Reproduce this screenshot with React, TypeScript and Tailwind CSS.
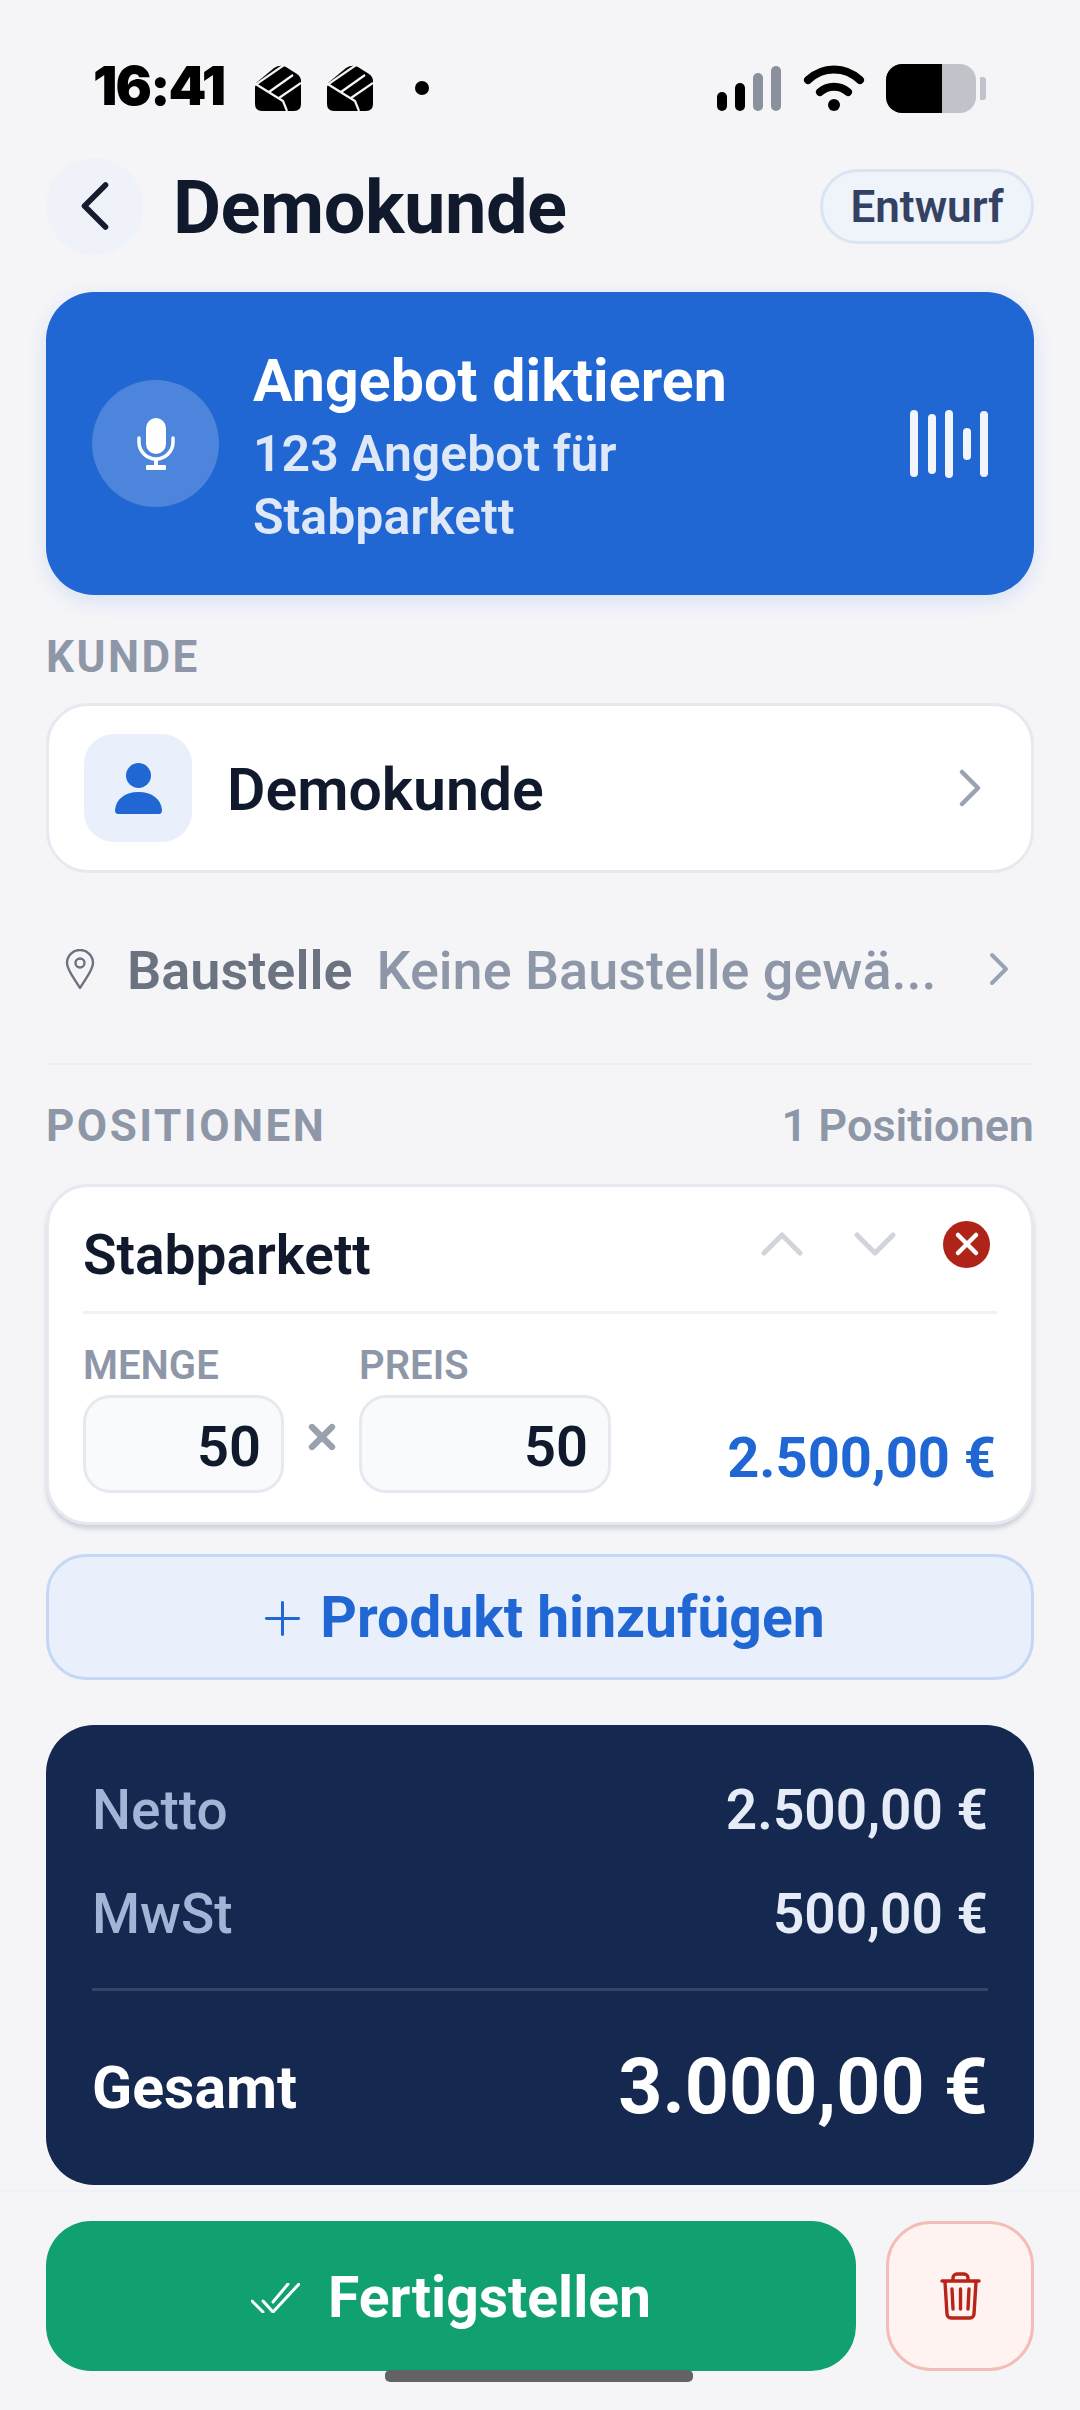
import { ChevronLeft, ChevronRight, ChevronUp, ChevronDown, Plus, X } from "lucide-react";

function Fist({ className }: { className?: string }) {
  return (
    <svg viewBox="0 0 46 46" className={className}>
      <path d="M1 18 L19 3 Q25 -1 31 2 L42 9 Q46 12 46 16 V39 Q46 46 39 46 H7 Q0 46 0 39 V22 Z" fill="#000" />
      <path d="M0 20 L29 0 M14 27 L38 10 M24 33 L46 18 M-1 18 L28 36 L32 46" fill="none" stroke="#f5f5f8" strokeWidth="2.2" />
    </svg>
  );
}

function StatusBar() {
  return (
    <div className="h-[50px] mt-[63px] pl-[93px] pr-[94px] flex items-center">
      <span className="[font-family:Inter,sans-serif] font-black text-[54px] leading-none tracking-[-1.8px] text-black w-[162px] -mt-[5px]">
        16:41
      </span>
      <Fist className="w-[46px] h-[46px]" />
      <Fist className="w-[46px] h-[46px] ml-[26px]" />
      <span className="w-[14px] h-[14px] rounded-full bg-black ml-[42px]" />
      <div className="ml-auto flex items-end gap-[8px] h-[46px]">
        <span className="w-[10px] h-[19px] rounded-full bg-black" />
        <span className="w-[10px] h-[28px] rounded-full bg-black" />
        <span className="w-[10px] h-[38px] rounded-full bg-[#8a909e]" />
        <span className="w-[10px] h-[45px] rounded-full bg-[#8a909e]" />
      </div>
      <svg viewBox="0 0 62 46" className="w-[62px] h-[46px] ml-[22px]">
        <path d="M5 15 C20 1 42 1 57 15" fill="none" stroke="#000" strokeWidth="8" strokeLinecap="round" />
        <path d="M17 27 C25 20 37 20 45 27" fill="none" stroke="#000" strokeWidth="8" strokeLinecap="round" />
        <circle cx="31" cy="40" r="6" fill="#000" />
      </svg>
      <div className="ml-[21px] flex items-center">
        <div className="w-[90px] h-[49px] rounded-[16px] overflow-hidden flex bg-[#c0c3c9]">
          <div className="w-[56px] bg-black" />
        </div>
        <span className="w-[6px] h-[23px] ml-[4px] rounded-r-[3px] bg-[#c0c3c9]" />
      </div>
    </div>
  );
}

export default function App() {
  const bars = [67, 60, 68, 32, 66];
  return (
    <div className="relative w-[1080px] h-[2410px] overflow-hidden bg-[#f5f5f8] [font-family:Roboto,sans-serif]">
      <StatusBar />

      <div className="px-[46px]">
        <header className="flex items-center h-[98px] mt-[44px]">
          <div className="w-[97px] h-[97px] rounded-full bg-[#eff2f8] flex items-center justify-center">
            <ChevronLeft className="w-[84px] h-[84px] text-[#141c2e] shrink-0" strokeWidth={1.6} />
          </div>
          <h1 className="ml-[30px] mt-[4px] text-[74px] leading-none font-bold text-[#111a2c] tracking-[-0.5px]">Demokunde</h1>
          <span className="ml-auto h-[75px] w-[214px] pt-[2px] flex items-center justify-center rounded-full border-[3px] border-[#dbe4f2] bg-[#eff3fa] text-[44px] font-semibold text-[#334163]">
            Entwurf
          </span>
        </header>

        <section className="mt-[37px] h-[303px] rounded-[48px] bg-[#2067d3] shadow-[0_6px_20px_rgba(32,103,211,0.14)] pl-[46px] pr-[46px] flex items-center">
          <div className="w-[127px] h-[127px] rounded-full bg-white/20 flex items-center justify-center">
            <svg viewBox="0 0 38 52" className="w-[38px] h-[52px]">
              <rect x="9" y="0" width="20" height="36" rx="10" fill="#fff" />
              <path d="M2 20 V24 a17 17 0 0 0 34 0 V20" fill="none" stroke="#fff" strokeWidth="3.5" strokeLinecap="round" />
              <rect x="17" y="40" width="4" height="9" fill="#fff" />
              <rect x="9" y="47" width="20" height="5" rx="1" fill="#fff" />
            </svg>
          </div>
          <div className="ml-[34px] flex-1 mt-[8px]">
            <div className="text-[59px] leading-[70px] font-bold text-white tracking-[0.1px]">Angebot diktieren</div>
            <div className="mt-[7px] text-[50px] leading-[63px] font-semibold text-[#dfe8f7] w-[480px]">123 Angebot für Stabparkett</div>
          </div>
          <div className="flex items-center gap-[9.5px]">
            {bars.map((h, i) => (
              <span key={i} className="w-[8px] rounded-full bg-[#f2f5fb]" style={{ height: h }} />
            ))}
          </div>
        </section>

        <div className="mt-[38px] text-[44px] leading-[48px] font-bold text-[#8e97a8] tracking-[2.5px]">KUNDE</div>

        <section className="mt-[22px] h-[170px] rounded-[42px] border-[3px] border-[#e6e9f0] bg-white pl-[35px] pr-[29px] flex items-center">
          <div className="w-[108px] h-[108px] rounded-[30px] bg-[#e9f0fc] flex items-center justify-center">
            <svg viewBox="0 0 47 51" className="w-[47px] h-[51px]">
              <circle cx="23.5" cy="12.5" r="12.5" fill="#2067d3" />
              <path d="M0 47 C1 36 10 29 23.5 29 C37 29 46 36 47 47 Q47 51 44 51 H3 Q0 51 0 47 Z" fill="#2067d3" />
            </svg>
          </div>
          <span className="ml-[35px] pt-[5px] text-[59px] font-semibold text-[#111a2c]">Demokunde</span>
          <ChevronRight className="ml-auto w-[64px] h-[64px] text-[#9aa3b2]" strokeWidth={1.7} />
        </section>

        <div className="mt-[66px] h-[60px] pl-[19px] flex items-center">
          <svg viewBox="0 0 30 40" className="w-[30px] h-[40px] shrink-0" fill="none" stroke="#6b7280" strokeWidth="2.4">
            <path d="M15 39 C9 29 2 21 2 14 A13 13 0 0 1 28 14 C28 21 21 29 15 39 Z" strokeLinejoin="round" />
            <circle cx="15" cy="14" r="4.5" />
          </svg>
          <span className="ml-[32px] pt-[2px] text-[54px] font-semibold text-[#6b7280]">Baustelle</span>
          <span className="ml-[24px] pt-[2px] text-[54px] font-medium text-[#8e97a8]">Keine Baustelle gewä...</span>
          <ChevronRight className="ml-auto mr-[7px] w-[56px] h-[56px] text-[#9aa3b2]" strokeWidth={1.7} />
        </div>

        <div className="mt-[64px] h-[2px] bg-[#e9eef5]" />

        <div className="mt-[37px] flex items-center justify-between h-[48px]">
          <span className="text-[44px] font-bold text-[#8e97a8] tracking-[2.5px]">POSITIONEN</span>
          <span className="text-[45px] font-semibold text-[#8e97a8]">1 Positionen</span>
        </div>

        <section className="mt-[34px] h-[341px] rounded-[42px] border-[3px] border-[#e6e9f0] bg-white shadow-[0_4px_4px_rgba(120,130,150,0.3)] px-[34px]">
          <div className="h-[127px] flex items-center border-b-[3px] border-[#eef1f6]">
            <span className="text-[55px] font-semibold text-[#111a2c] mt-[12px]">Stabparkett</span>
            <ChevronUp className="ml-auto w-[72px] h-[72px] text-[#d1d5db] -mt-[10px]" strokeWidth={1.7} />
            <ChevronDown className="ml-[21px] w-[72px] h-[72px] text-[#d1d5db] -mt-[10px]" strokeWidth={1.7} />
            <span className="ml-[32px] mr-[7px] w-[47px] h-[47px] rounded-full bg-[#b02318] flex items-center justify-center -mt-[10px]">
              <X className="w-[36px] h-[36px] text-white" strokeWidth={3} />
            </span>
          </div>
          <div className="flex mt-[32px]">
            <div className="w-[201px]">
              <div className="text-[40px] leading-[40px] font-semibold text-[#8e97a8]">MENGE</div>
              <div className="mt-[9px] h-[98px] rounded-[27px] border-[3px] border-[#e6e9f0] bg-[#f9fafc] flex items-center justify-end pr-[20px] pt-[6px] text-[56px] font-semibold text-[#111a2c]">
                50
              </div>
            </div>
            <X className="mt-[71px] ml-[18px] mr-[17px] w-[40px] h-[40px] text-[#9aa1ae] shrink-0" strokeWidth={3.8} />
            <div className="w-[252px]">
              <div className="text-[40px] leading-[40px] font-semibold text-[#8e97a8]">PREIS</div>
              <div className="mt-[9px] h-[98px] rounded-[27px] border-[3px] border-[#e6e9f0] bg-[#f9fafc] flex items-center justify-end pr-[20px] pt-[6px] text-[56px] font-semibold text-[#111a2c]">
                50
              </div>
            </div>
            <div className="ml-auto mr-[1px] self-end text-[56px] leading-[62px] font-bold text-[#2067d3] mb-[4px]">2.500,00 €</div>
          </div>
        </section>

        <button className="mt-[29px] w-full h-[126px] rounded-[40px] border-[3px] border-[#c4d7f7] bg-[#e9f0fc] pt-[2px] flex items-center justify-center text-[57px] font-bold text-[#2067d3]">
          <Plus className="w-[55px] h-[55px] mr-[10px]" strokeWidth={1.3} />
          Produkt hinzufügen
        </button>

        <section className="mt-[45px] h-[460px] rounded-[48px] bg-[#152950] px-[46px] pt-[54px]">
          <div className="flex justify-between items-center h-[62px] text-[55px]">
            <span className="font-medium text-[#a2b5d6]">Netto</span>
            <span className="font-semibold text-[#e6ecf7]">2.500,00 €</span>
          </div>
          <div className="flex justify-between items-center h-[62px] mt-[42px] text-[55px]">
            <span className="font-medium text-[#a2b5d6]">MwSt</span>
            <span className="font-semibold text-[#e6ecf7]">500,00 €</span>
          </div>
          <div className="mt-[43px] h-[3px] bg-[#344667]" />
          <div className="flex justify-between items-center mt-[49px] h-[96px] text-white">
            <span className="text-[59px] font-bold">Gesamt</span>
            <span className="text-[77px] font-bold">3.000,00 €</span>
          </div>
        </section>
      </div>

      <footer className="mt-[5px] border-t-[2px] border-[#eef1f6] px-[46px] pt-[29px] flex gap-[30px]">
        <button className="flex-1 h-[150px] rounded-[45px] bg-[#11a06f] pt-[4px] flex items-center justify-center text-[57px] font-bold text-white">
          <svg viewBox="0 0 49 30" className="w-[49px] h-[30px] mr-[28px]" fill="none" stroke="#fff" strokeWidth="3" strokeLinecap="round">
            <path d="M1 18 L12 29" />
            <path d="M12 18 L22 29 L48 1" />
            <path d="M22 19 L37 1" />
          </svg>
          Fertigstellen
        </button>
        <button className="w-[148px] h-[150px] rounded-[45px] border-[3px] border-[#f3bdb7] bg-[#fff3f2] flex items-center justify-center">
          <svg viewBox="0 0 41 48" className="w-[41px] h-[48px]" fill="none" stroke="#b92318" strokeWidth="3.4" strokeLinecap="round" strokeLinejoin="round">
            <path d="M13 8 V6 a4 4 0 0 1 4 -4 h7 a4 4 0 0 1 4 4 V8" />
            <path d="M2 9 H39" />
            <path d="M5 10 L7 42 a4 4 0 0 0 4 4 H30 a4 4 0 0 0 4 -4 L36 10" />
            <path d="M12 17 L13 37 M20.5 17 V37 M29 17 L28 37" />
          </svg>
        </button>
      </footer>

      <div className="absolute left-[385px] top-[2370px] w-[308px] h-[12px] rounded-[5px] bg-[#636366]" />
    </div>
  );
}
